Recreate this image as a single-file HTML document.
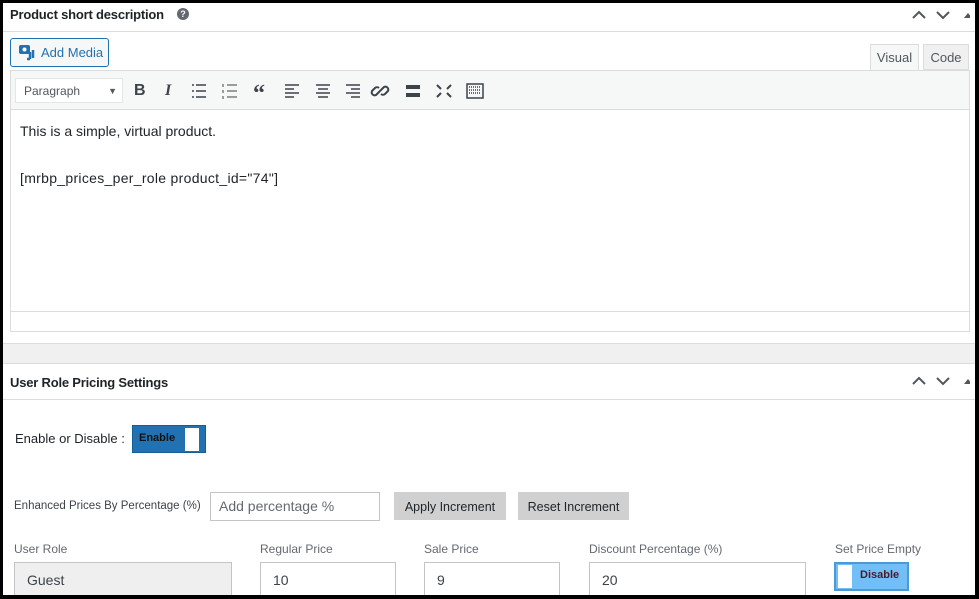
<!DOCTYPE html>
<html><head><style>
*{box-sizing:border-box;margin:0;padding:0}
body{width:979px;height:599px;background:#000;position:relative;overflow:hidden;font-family:"Liberation Sans",sans-serif;color:#1d2327}
.a{position:absolute}
.panel{position:absolute;left:3px;top:3px;width:972px;height:592px;background:#fff}
.ib{position:absolute;border:1px solid #c3c4c7;background:#fff;font-size:14px;color:#3c434a;padding-left:12px;line-height:30px}
.lbl{position:absolute;font-size:12px;color:#646970}
</style></head><body>
<div class="panel"></div>
<div class="a" style="left:10px;top:7px;font-size:13px;font-weight:bold;letter-spacing:-0.2px">Product short description</div>
<div class="a" style="left:177px;top:8px;width:12px;height:12px;border-radius:50%;background:#646970;color:#fff;font-size:9px;font-weight:bold;text-align:center;line-height:12px">?</div>
<svg class="a" style="left:910px;top:8px" width="60" height="14"><path d="M3 10l6-6 6 6M27 4l6 6 6-6" stroke="#50575e" stroke-width="2" fill="none"/><path d="M54 10l4-5 4 5z" fill="#50575e"/></svg>
<div class="a" style="left:3px;top:31px;width:972px;height:1px;background:#dcdcde"></div>
<div class="a" style="left:10px;top:38px;width:99px;height:29px;border:1px solid #2271b1;border-radius:3px;background:#f6f7f7;color:#2271b1;font-size:13px;line-height:27px;padding-left:30px">Add Media</div>
<svg class="a" style="left:18px;top:44px" width="18" height="17"><rect x="1" y="1" width="11" height="9" rx="2" fill="#2271b1"/><circle cx="6.5" cy="5.5" r="2" fill="#fff"/><path d="M12 8v7M9 15h3M15 6v8" stroke="#2271b1" stroke-width="2.5"/></svg>
<div class="a" style="left:870px;top:44px;width:49px;height:27px;border:1px solid #dcdcde;border-bottom:none;background:#f6f7f7;font-size:13px;color:#50575e;text-align:center;line-height:26px">Visual</div>
<div class="a" style="left:923px;top:44px;width:46px;height:26px;border:1px solid #dcdcde;background:#f0f0f1;font-size:13px;color:#50575e;text-align:center;line-height:26px">Code</div>
<div class="a" style="left:10px;top:70px;width:960px;height:262px;border:1px solid #dcdcde;background:#fff"></div>
<div class="a" style="left:11px;top:71px;width:958px;height:39px;background:#f6f7f7;border-bottom:1px solid #dcdcde"></div>
<div class="a" style="left:15px;top:78px;width:108px;height:25px;background:#fff;border:1px solid #e6e6e6;font-size:12px;color:#50575e;line-height:24px;padding-left:8px">Paragraph<span style="position:absolute;right:5px;font-size:9px">&#9660;</span></div>
<div class="a" style="left:134px;top:82px;font-size:16px;font-weight:bold;color:#3c434a">B</div>
<div class="a" style="left:165px;top:82px;font-size:16px;font-style:italic;font-family:'Liberation Serif',serif;font-weight:bold;color:#3c434a">I</div>
<svg class="a" style="left:192px;top:82px" width="300" height="18" stroke="#3c434a" stroke-width="1.5" fill="none">
<path d="M4 3h10M4 9h10M4 15h10M0 3h2M0 9h2M0 15h2"/>
<path d="M35 3h10M35 9h10M35 15h10M31 2v3M31 8v3M31 14v3" stroke-width="1"/>
<text x="61" y="19" font-size="24" font-weight="bold" fill="#3c434a" stroke="none" font-family="Liberation Serif">&#8220;</text>
<path d="M93 3h14M93 7h9M93 11h14M93 15h9"/>
<path d="M124 3h14M126 7h10M124 11h14M126 15h10"/>
<path d="M154 3h14M159 7h9M154 11h14M159 15h9"/>
<path d="M186 11l-2 2a3 3 0 0 1-4-4l3-3a3 3 0 0 1 4 0M190 7l2-2a3 3 0 0 1 4 4l-3 3a3 3 0 0 1-4 0M185 12l6-6" stroke-width="2"/>
<path d="M214 3h14v4h-14zM214 11h14v4h-14z" fill="#3c434a" stroke="none"/>
<path d="M245 3l4 4M259 3l-4 4M245 15l4-4M259 15l-4-4" stroke-width="2"/>
<rect x="275" y="2" width="16" height="14"/><path d="M277 5h12M277 8h12M277 11h12" stroke-dasharray="1 1"/>
</svg>
<div class="a" style="left:20px;top:123px;font-size:14px;color:#1d2327">This is a simple, virtual product.</div>
<div class="a" style="left:20px;top:170px;font-size:14px;color:#1d2327;letter-spacing:0.3px">[mrbp_prices_per_role product_id="74"]</div>
<div class="a" style="left:11px;top:311px;width:958px;height:1px;background:#dcdcde"></div>
<div class="a" style="left:3px;top:343px;width:972px;height:21px;background:#f0f0f1;border-top:1px solid #dcdcde;border-bottom:1px solid #dcdcde"></div>
<div class="a" style="left:10px;top:375px;font-size:13px;font-weight:bold;letter-spacing:-0.2px">User Role Pricing Settings</div>
<svg class="a" style="left:910px;top:374px" width="60" height="14"><path d="M3 10l6-6 6 6M27 4l6 6 6-6" stroke="#50575e" stroke-width="2" fill="none"/><path d="M54 10l4-5 4 5z" fill="#50575e"/></svg>
<div class="a" style="left:3px;top:399px;width:972px;height:1px;background:#dcdcde"></div>
<div class="a" style="left:15px;top:431px;font-size:13px">Enable or Disable :</div>
<div class="a" style="left:132px;top:425px;width:74px;height:28px;background:#2271b1;border:1px solid #135e96"></div>
<div class="a" style="left:139px;top:432px;font-size:11px;font-weight:bold;color:#111">Enable</div>
<div class="a" style="left:185px;top:428px;width:14px;height:23px;background:#fff"></div>
<div class="a" style="left:14px;top:500px;font-size:11.5px;color:#3c434a">Enhanced Prices By Percentage (%)</div>
<div class="ib" style="left:210px;top:492px;width:170px;height:29px;line-height:27px;padding-left:8px;color:#646970">Add percentage %</div>
<div class="a" style="left:394px;top:492px;width:112px;height:28px;background:#d0d0d0;font-size:12.5px;text-align:center;line-height:30px">Apply Increment</div>
<div class="a" style="left:518px;top:492px;width:111px;height:28px;background:#d0d0d0;font-size:12.5px;text-align:center;line-height:30px">Reset Increment</div>
<div class="lbl" style="left:14px;top:542px">User Role</div>
<div class="lbl" style="left:260px;top:542px">Regular Price</div>
<div class="lbl" style="left:424px;top:542px">Sale Price</div>
<div class="lbl" style="left:589px;top:542px">Discount Percentage (%)</div>
<div class="lbl" style="left:835px;top:542px">Set Price Empty</div>
<div class="ib" style="left:14px;top:562px;width:218px;height:34px;background:#efefef;line-height:34px">Guest</div>
<div class="ib" style="left:260px;top:562px;width:136px;height:34px;line-height:34px">10</div>
<div class="ib" style="left:424px;top:562px;width:136px;height:34px;line-height:34px">9</div>
<div class="ib" style="left:589px;top:562px;width:217px;height:34px;line-height:34px">20</div>
<div class="a" style="left:834px;top:562px;width:75px;height:29px;background:#72bff7;border:2px solid #4a9ad6"></div>
<div class="a" style="left:838px;top:565px;width:14px;height:23px;background:#fff"></div>
<div class="a" style="left:860px;top:569px;font-size:11px;font-weight:bold;color:#4a1a2a">Disable</div>
<div class="a" style="left:0;top:595px;width:979px;height:4px;background:#000"></div>
</body></html>
